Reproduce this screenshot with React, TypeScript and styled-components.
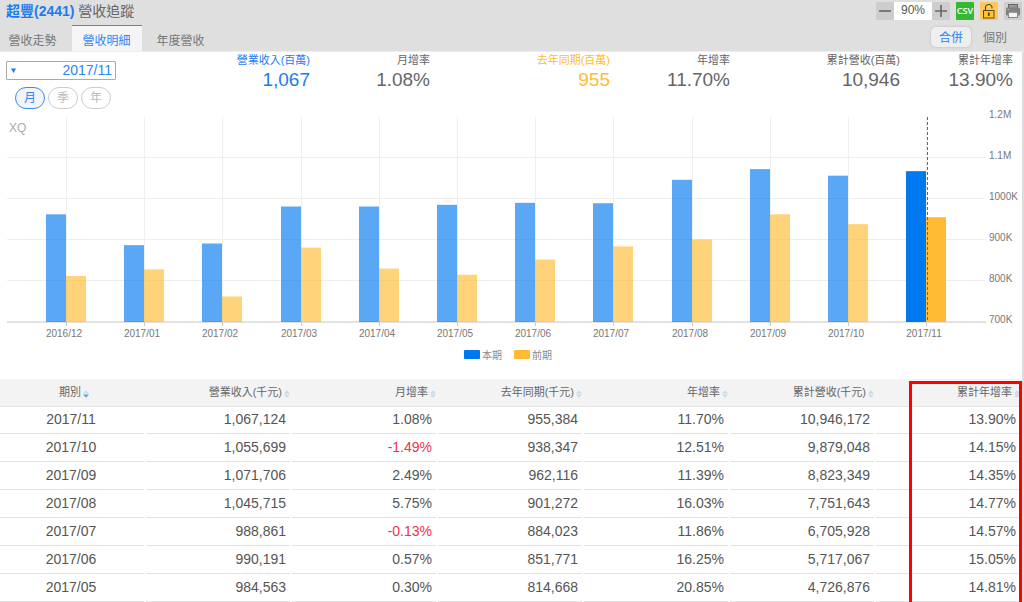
import React, { useState } from "react";
import styled, { createGlobalStyle, css } from "styled-components";

const BLUE = "#0078f0";
const AMBER = "#ffbb33";
const FONT = `"Liberation Sans", "Noto Sans CJK TC", sans-serif`;

const GlobalStyle = createGlobalStyle`
  *, *::before, *::after { box-sizing: border-box; }
  body { margin: 0; background: #fff; font-family: ${FONT}; color: #666; }
  button, input, select { font-family: inherit; margin: 0; padding: 0; }
`;

const Page = styled.div`
  min-height: 100vh;
  display: flex;
  flex-direction: column;
`;

const Header = styled.header`
  display: flex;
  justify-content: space-between;
  background: #dfdfdf;
  border-bottom: 1px solid #ededed;
  height: 52px;
`;

const HeaderSide = styled.div<{ $end?: boolean }>`
  display: flex;
  flex-direction: column;
  justify-content: space-between;
  align-items: ${(p) => (p.$end ? "flex-end" : "flex-start")};
`;

const Title = styled.h1`
  margin: 0;
  padding: 1px 0 0 6px;
  font-size: 14px;
  line-height: 20px;
  font-weight: 400;
  color: #666;
`;

const Stock = styled.strong`
  color: #1a7cf0;
  font-weight: 700;
`;

const Tabs = styled.nav`
  display: flex;
  gap: 4px;
  margin-left: -2px;
`;

const Tab = styled.button<{ $active?: boolean }>`
  height: 26px;
  padding: 2px 11px 0 10px;
  border: 0;
  border-top: 1px solid ${(p) => (p.$active ? "#3a8df0" : "transparent")};
  background: ${(p) => (p.$active ? "#f5f5f5" : "transparent")};
  color: ${(p) => (p.$active ? "#2a86f5" : "#777")};
  width: 70px;
  font-size: 12px;
  white-space: nowrap;
  cursor: pointer;
`;

const Toolbar = styled.div`
  display: flex;
  gap: 6px;
  padding: 2px 2px 0 0;
`;

const Zoom = styled.div`
  display: flex;
`;

const ToolButton = styled.button<{ $bg: string }>`
  display: grid;
  place-items: center;
  width: 18px;
  height: 18px;
  border: 0;
  border-radius: 1px;
  background: ${(p) => p.$bg};
  cursor: pointer;
`;

const ZoomInput = styled.input`
  width: 38px;
  height: 18px;
  padding-bottom: 2px;
  border: 0;
  background: #fff;
  color: #555;
  font-size: 12px;
  text-align: center;
`;

const Segments = styled.div`
  display: flex;
  gap: 4px;
  padding: 0 9px 4px 0;
`;

const Segment = styled.button<{ $active?: boolean }>`
  height: 20px;
  padding: 1px 8px 0;
  border: 0;
  border-radius: 5px;
  background: transparent;
  color: #777;
  font-size: 12px;
  line-height: 20px;
  cursor: pointer;
  ${(p) =>
    p.$active &&
    css`
      background: #eee;
      color: #2a86f5;
      box-shadow: 0 0 3px #bbb;
    `}
`;

const Body = styled.main`
  flex: 1;
  border-right: 2px solid #dcdcdc;
`;

const Summary = styled.section`
  display: flex;
`;

const Controls = styled.div`
  flex: none;
  width: 122px;
  padding: 9px 6px 0;
  display: flex;
  flex-direction: column;
  gap: 7px;
`;

const SelectBox = styled.label`
  display: flex;
  align-items: center;
  height: 19px;
  padding-left: 4px;
  border: 1px solid #aaa;
  border-radius: 1px;
  background: #fff;
`;

const MonthSelect = styled.select`
  flex: 1;
  height: 17px;
  padding: 0 3px;
  border: 0;
  appearance: none;
  background: transparent;
  color: #2a86f5;
  font-size: 14px;
  line-height: 17px;
  text-align-last: right;
`;

const Pills = styled.div`
  display: flex;
  gap: 3px;
  padding-left: 9px;
`;

const Pill = styled.button<{ $active?: boolean }>`
  width: 30px;
  height: 22px;
  border: 1px solid ${(p) => (p.$active ? "#3a8df0" : "#ccc")};
  border-radius: 11px;
  background: ${(p) => (p.$active ? "#f2f4f7" : "#fff")};
  color: ${(p) => (p.$active ? "#2a86f5" : "#bbb")};
  font-size: 12px;
  line-height: 20px;
  cursor: pointer;
`;

const Stats = styled.dl`
  flex: 1;
  margin: 0;
  padding-right: 9px;
  display: grid;
  grid-template-columns: 188fr 120fr 180fr 120fr 170fr 113fr;
  text-align: right;
`;

const Stat = styled.div<{ $color?: string }>`
  color: ${(p) => p.$color || "#666"};
`;

const StatLabel = styled.dt`
  font-size: 11px;
  line-height: 16px;
  white-space: nowrap;
`;

const StatValue = styled.dd`
  margin: 0;
  font-size: 19px;
  line-height: 24px;
`;

const ChartSvg = styled.svg`
  display: block;
  width: 100%;
  height: auto;
  font-size: 10px;
  fill: #777;
`;

const Legend = styled.div`
  display: flex;
  justify-content: center;
  gap: 12px;
  height: 34px;
  padding-right: 6px;
  font-size: 10px;
  line-height: 22px;
  color: #888;
`;

const LegendItem = styled.span<{ $color: string }>`
  display: flex;
  gap: 2px;
  &::before {
    content: "";
    width: 16px;
    height: 9px;
    margin-top: 5px;
    border-radius: 1px;
    background: ${(p) => p.$color};
  }
`;

const TableWrap = styled.section`
  position: relative;
  overflow: hidden;
`;

const Highlight = styled.div`
  position: absolute;
  top: 2px;
  right: 0;
  bottom: -3px;
  width: 113px;
  border: 3px solid #f00;
  pointer-events: none;
`;

const Table = styled.table`
  width: 100%;
  table-layout: fixed;
  border-collapse: collapse;
`;

const Th = styled.th`
  height: 27px;
  padding: 0 2px 0 0;
  background: #f3f3f3;
  border-bottom: 1px solid #e2e2e2;
  text-align: right;
  font-weight: 400;
  &:first-child {
    padding: 0 0 0 2px;
    text-align: center;
  }
`;

const SortButton = styled.button`
  display: inline-flex;
  align-items: center;
  gap: 2px;
  border: 0;
  background: transparent;
  color: #666;
  font-size: 11px;
  line-height: 22px;
  vertical-align: top;
  white-space: nowrap;
  cursor: pointer;
`;

const SortSvg = styled.svg`
  margin-top: 4px;
`;

const Td = styled.td<{ $down?: boolean }>`
  height: 28px;
  padding: 0 6px 3px 0;
  background: linear-gradient(to right, #e2e2e2 calc(100% - 2px), #fff 0) bottom / 100% 1px no-repeat;
  color: ${(p) => (p.$down ? "#f0324b" : "#555")};
  font-size: 14px;
  text-align: right;
  &:first-child {
    padding-right: 4px;
    text-align: center;
  }
`;

const stats = [
  { label: "營業收入(百萬)", value: "1,067", color: "#1a7cf0" },
  { label: "月增率", value: "1.08%" },
  { label: "去年同期(百萬)", value: "955", color: AMBER },
  { label: "年增率", value: "11.70%" },
  { label: "累計營收(百萬)", value: "10,946" },
  { label: "累計年增率", value: "13.90%" },
];

const series: [string, number, number][] = [
  ["2016/12", 962, 812],
  ["2017/01", 887, 828],
  ["2017/02", 891, 762],
  ["2017/03", 981, 881],
  ["2017/04", 981, 830],
  ["2017/05", 985, 815],
  ["2017/06", 990, 852],
  ["2017/07", 989, 884],
  ["2017/08", 1046, 901],
  ["2017/09", 1072, 962],
  ["2017/10", 1056, 938],
  ["2017/11", 1067, 955],
];

const levels: [string, number][] = [
  ["1.2M", 1200],
  ["1.1M", 1100],
  ["1000K", 1000],
  ["900K", 900],
  ["800K", 800],
  ["700K", 700],
];

const columns = ["期別", "營業收入(千元)", "月增率", "去年同期(千元)", "年增率", "累計營收(千元)", "累計年增率"];

const rows = [
  ["2017/11", "1,067,124", "1.08%", "955,384", "11.70%", "10,946,172", "13.90%"],
  ["2017/10", "1,055,699", "-1.49%", "938,347", "12.51%", "9,879,048", "14.15%"],
  ["2017/09", "1,071,706", "2.49%", "962,116", "11.39%", "8,823,349", "14.35%"],
  ["2017/08", "1,045,715", "5.75%", "901,272", "16.03%", "7,751,643", "14.77%"],
  ["2017/07", "988,861", "-0.13%", "884,023", "11.86%", "6,705,928", "14.57%"],
  ["2017/06", "990,191", "0.57%", "851,771", "16.25%", "5,717,067", "15.05%"],
  ["2017/05", "984,563", "0.30%", "814,668", "20.85%", "4,726,876", "14.81%"],
];

const BASE = 213;
const yOf = (v: number) => BASE - (v - 700) * 0.411;
const xOf = (i: number) => Math.round(66 + i * 78.2);

function RevenueChart() {
  return (
    <ChartSvg viewBox="0 0 1022 236" role="img" aria-label="營收明細">
      {levels.slice(1, 5).map(([name, v]) => (
        <rect key={name} x={7} y={Math.round(yOf(v)) - 1} width={979} height={1} fill="#eee" />
      ))}
      {series.map(([month], i) => (
        <rect key={month} x={xOf(i)} y={8} width={1} height={BASE - 8} fill="#eee" />
      ))}
      <rect x={7} y={BASE - 1} width={979} height={2} fill="#e2e2e2" />
      {series.map(([month, now, before], i) => {
        const opacity = i === series.length - 1 ? 1 : 0.65;
        const x = xOf(i);
        return (
          <g key={month}>
            <rect x={x} y={BASE} width={1} height={4} fill="#ccc" />
            <rect x={x - 20} y={yOf(now)} width={20} height={BASE - yOf(now)} fill={BLUE} opacity={opacity} />
            <rect x={x} y={yOf(before)} width={20} height={BASE - yOf(before)} fill={AMBER} opacity={opacity} />
            <text x={x - 2} y={228} textAnchor="middle">
              {month}
            </text>
          </g>
        );
      })}
      <line x1={927.5} x2={927.5} y1={8} y2={BASE} stroke="#666677" strokeWidth={1} strokeDasharray="3 2" />
      {levels.map(([name, v]) => (
        <text key={name} x={989} y={Math.round(yOf(v)) + 1}>
          {name}
        </text>
      ))}
      <text x={9} y={23} fontSize={12} fill="#aaa">
        XQ
      </text>
    </ChartSvg>
  );
}

function SortIcon({ active }: { active: boolean }) {
  return (
    <SortSvg width="6" height="8" viewBox="0 0 6 8" aria-hidden="true">
      <path d="M3 0.2L6 3.4H0Z" fill="#c3dcee" />
      <path d="M3 7.8L6 4.6H0Z" fill={active ? "#5aa8de" : "#c3dcee"} />
    </SortSvg>
  );
}

export default function App() {
  const [zoom, setZoom] = useState(90);
  const [tab, setTab] = useState("營收明細");
  const [scope, setScope] = useState("合併");
  const [period, setPeriod] = useState("月");
  const [sorted, setSorted] = useState("期別");

  return (
    <Page>
      <GlobalStyle />
      <Header>
        <HeaderSide>
          <Title>
            <Stock>超豐(2441)</Stock> 營收追蹤
          </Title>
          <Tabs>
            {["營收走勢", "營收明細", "年度營收"].map((name) => (
              <Tab key={name} $active={name === tab} onClick={() => setTab(name)}>
                {name}
              </Tab>
            ))}
          </Tabs>
        </HeaderSide>
        <HeaderSide $end>
          <Toolbar>
            <Zoom>
              <ToolButton $bg="#cdcdcd" aria-label="縮小" onClick={() => setZoom(zoom - 10)}>
                <svg width="14" height="14" viewBox="0 0 14 14">
                  <path d="M1 7H13" stroke="#666" strokeWidth="1.6" />
                </svg>
              </ToolButton>
              <ZoomInput aria-label="縮放" value={`${zoom}%`} readOnly />
              <ToolButton $bg="#cdcdcd" aria-label="放大" onClick={() => setZoom(zoom + 10)}>
                <svg width="14" height="14" viewBox="0 0 14 14">
                  <path d="M1 7H13M7 1V13" stroke="#666" strokeWidth="1.6" />
                </svg>
              </ToolButton>
            </Zoom>
            <ToolButton $bg="#35b935" aria-label="CSV">
              <svg width="18" height="18" viewBox="0 0 18 18">
                <text x="9" y="12" textAnchor="middle" fontFamily="Open Sans, sans-serif" fontSize="9" fontWeight="600" fill="#fff">
                  CSV
                </text>
              </svg>
            </ToolButton>
            <ToolButton $bg="#ffc65c" aria-label="鎖定">
              <svg width="18" height="18" viewBox="0 0 18 18" fill="none" stroke="#5a4a20">
                <path d="M5.5 9V5.5Q5.5 2.5 8.7 2.5Q12 2.5 12 5.5V6.5" strokeWidth="1.1" />
                <rect x="3.5" y="8.5" width="10.5" height="7.5" fill="#ffc52a" strokeWidth="1" />
                <path d="M8.8 10.5V14" strokeWidth="1.8" />
              </svg>
            </ToolButton>
            <ToolButton $bg="#cdcdcd" aria-label="列印">
              <svg width="18" height="18" viewBox="0 0 18 18">
                <rect x="4.5" y="2.5" width="9" height="4" fill="#999" stroke="#666" />
                <rect x="2" y="5.5" width="14" height="8" rx="1.5" fill="#808080" />
                <rect x="3.3" y="7" width="2" height="1" fill="#d99" />
                <rect x="4.5" y="9.5" width="9" height="6" fill="#f4f4f4" stroke="#888" />
                <path d="M5 10.5H13" stroke="#999" />
              </svg>
            </ToolButton>
          </Toolbar>
          <Segments>
            {["合併", "個別"].map((name) => (
              <Segment key={name} $active={name === scope} onClick={() => setScope(name)}>
                {name}
              </Segment>
            ))}
          </Segments>
        </HeaderSide>
      </Header>
      <Body>
        <Summary>
          <Controls>
            <SelectBox>
              <svg width="5" height="5" viewBox="0 0 5 5" aria-hidden="true">
                <path d="M0 0.5H5L2.5 5Z" fill="#1a7cf0" />
              </svg>
              <MonthSelect aria-label="期別">
                {rows.map(([month]) => (
                  <option key={month}>{month}</option>
                ))}
              </MonthSelect>
            </SelectBox>
            <Pills>
              {["月", "季", "年"].map((name) => (
                <Pill key={name} $active={name === period} onClick={() => setPeriod(name)}>
                  {name}
                </Pill>
              ))}
            </Pills>
          </Controls>
          <Stats>
            {stats.map((s) => (
              <Stat key={s.label} $color={s.color}>
                <StatLabel>{s.label}</StatLabel>
                <StatValue>{s.value}</StatValue>
              </Stat>
            ))}
          </Stats>
        </Summary>
        <RevenueChart />
        <Legend>
          <LegendItem $color={BLUE}>本期</LegendItem>
          <LegendItem $color={AMBER}>前期</LegendItem>
        </Legend>
        <TableWrap>
          <Table>
            <thead>
              <tr>
                {columns.map((name) => (
                  <Th key={name} scope="col">
                    <SortButton onClick={() => setSorted(name)}>
                      {name}
                      <SortIcon active={name === sorted} />
                    </SortButton>
                  </Th>
                ))}
              </tr>
            </thead>
            <tbody>
              {rows.map((row) => (
                <tr key={row[0]}>
                  {row.map((cell, i) => (
                    <Td key={columns[i]} $down={cell.startsWith("-")}>
                      {cell}
                    </Td>
                  ))}
                </tr>
              ))}
            </tbody>
          </Table>
          <Highlight />
        </TableWrap>
      </Body>
    </Page>
  );
}
